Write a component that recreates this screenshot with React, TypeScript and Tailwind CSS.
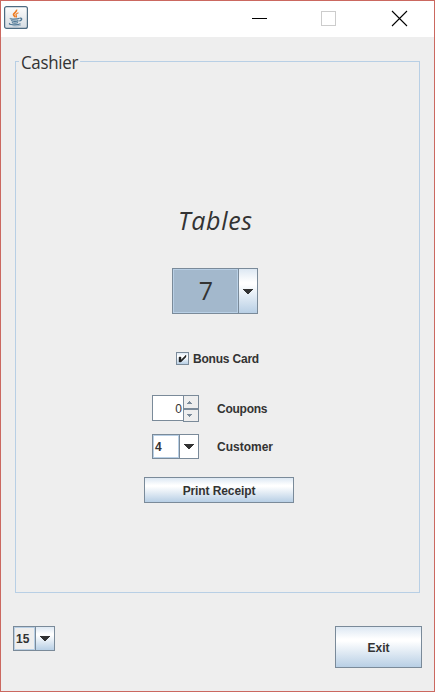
import React from "react";

const arial = "font-['Liberation_Sans',Arial,sans-serif] font-bold text-[12px] leading-[14px] text-[#333333]";
const metal = "bg-[linear-gradient(180deg,#dde8f3_0%,#ffffff_30%,#ffffff_35%,#b8cfe5_100%)]";

function Arrow() {
  return (
    <svg width="10" height="5" viewBox="0 0 10 5" shapeRendering="crispEdges">
      <path d="M0 0h10v1h-1v1h-1v1h-1v1h-1v1H4V4H3V3H2V2H1V1H0z" fill="#333" />
    </svg>
  );
}

function JavaIcon() {
  return (
    <svg width="24" height="23" viewBox="0 0 24 23" fill="none">
      <defs>
        <linearGradient id="plate" x1="0" y1="0" x2="0" y2="1">
          <stop offset="0" stopColor="#fdfdfd" />
          <stop offset="1" stopColor="#d5dce2" />
        </linearGradient>
      </defs>
      <rect x="0.6" y="0.6" width="22.8" height="21.8" rx="2" fill="url(#plate)" stroke="#4d6b82" strokeWidth="1.2" />
      <path d="M12.5 3.700c1 2-3.300 3.300-3 5 .2 1.200 1.500 1.700 1.800 2.600" stroke="#ee7b22" strokeWidth="1.700" />
      <path d="M14.500 6.800c-2 .8-3.200 1.700-2.400 2.600.6.8.5 1.400-.3 2" stroke="#ee7b22" strokeWidth="1.200" />
      <path d="M6.500 12.300c-1.500 1.100 7 1.100 9 0M7.300 14.300c.5 1.200 5.700 1.200 7.200.3M8 16.300c.8 1 4.500 1 6 .2M15.800 12.200c2.800-.5 2.500 2.200-.4 2.800" stroke="#4f7896" strokeWidth="1.300" />
      <path d="M6 17.300c-3.500 1.600 8 2.300 10.500.3" stroke="#4f7896" strokeWidth="1.100" />
      <path d="M8.500 19.700c3 .4 6.500.3 8.500-.8" stroke="#86a3b9" strokeWidth=".8" />
    </svg>
  );
}

export default function App() {
  return (
    <div className="flex h-[692px] w-[435px] flex-col border border-[#cb6860] bg-[#eeeeee]">
      <header className="flex h-[36px] shrink-0 bg-white">
        <div className="ml-[3px] mt-[5px]"><JavaIcon /></div>
        <svg className="ml-[223px] mt-[9px]" width="160" height="18" viewBox="0 0 160 18" fill="none">
          <path d="M1 8.500h15" stroke="#000" />
          <rect x="70.500" y="1.500" width="14" height="14" stroke="#cccccc" />
          <path d="M141 1l15 15M156 1l-15 15" stroke="#000" strokeWidth="1.100" />
        </svg>
      </header>

      <main className="flex grow flex-col">
        <section className="ml-[14px] mt-[24px] flex h-[532px] w-[405px] flex-col items-start border border-[#b8cfe5]">
          <h1 className="-mt-[13px] ml-[3px] h-[26px] w-[65px] origin-left scale-x-[0.94] whitespace-nowrap bg-[#eeeeee] pl-[2px] font-['Open_Sans',sans-serif] text-[18px] font-normal leading-[26px] tracking-[-0.300px] text-[#333333]">Cashier</h1>
          <h2 className="ml-[162px] mt-[126px] h-[38px] whitespace-nowrap font-['Open_Sans',sans-serif] text-[25px] font-normal italic leading-[38px] tracking-[0.700px] text-[#333333]">Tables</h2>

          <div className="ml-[156px] mt-[29px] flex h-[46px] w-[86px] border border-[#7a8a99]">
            <div className="flex w-[65px] items-center justify-center border border-[#b8cfe5] bg-[#a3b8cc] pl-[1px] font-['Open_Sans',sans-serif] text-[25px] text-[#333333]">7</div>
            <div className={"flex grow items-center border-l border-[#7a8a99] pl-[4px] pt-[1px] " + metal}><Arrow /></div>
          </div>

          <label className="ml-[160px] mt-[37px] flex h-[14px] items-center">
            <span className={"flex h-[13px] w-[13px] items-center justify-center border border-[#7a8a99] " + metal}>
              <svg width="9" height="9" viewBox="0 0 9 9"><path d="M1 3h2v3l5-5v2L3 8H1z" fill="#222" stroke="#222" strokeWidth=".4" /></svg>
            </span>
            <span className={"ml-[4px] mt-[2px] whitespace-nowrap tracking-[-0.200px] " + arial}>Bonus Card</span>
          </label>

          <div className="ml-[136px] mt-[30px] flex h-[27px]">
            <div className="flex h-[26px] w-[31px] items-center justify-end border border-r-0 border-[#7a8a99] bg-white pr-[1px] pt-[1px] font-['Liberation_Sans',sans-serif] text-[12px] text-[#333333]">0</div>
            <div className="flex w-[16px] flex-col border border-[#7a8a99]">
              <div className="flex h-[12px] items-center pl-[3px]"><svg width="5" height="3" shapeRendering="crispEdges"><path d="M2 0h1v1h1v1h1v1H0V2h1V1h1z" fill="#7a8a99" /></svg></div>
              <div className="h-[2px] bg-[#7a8a99]" />
              <div className="flex grow items-center pl-[3px]"><svg width="5" height="3" shapeRendering="crispEdges"><path d="M0 0h5v1H4v1H3v1H2V2H1V1H0z" fill="#7a8a99" /></svg></div>
            </div>
            <span className={"ml-[18px] mt-[7px] tracking-[-0.250px] " + arial}>Coupons</span>
          </div>

          <div className="ml-[136px] mt-[12px] flex h-[25px]">
            <div className="flex w-[47px] border border-[#7a8a99] bg-white">
              <div className={"flex w-[26px] items-center border border-[#b8cfe5] pl-[1px] " + arial}>4</div>
              <div className="flex grow items-center border-l border-[#7a8a99] pl-[4px]"><Arrow /></div>
            </div>
            <span className={"ml-[18px] mt-[6px] " + arial}>Customer</span>
          </div>

          <button className={"ml-[128px] mt-[18px] h-[26px] w-[150px] border border-[#7a8a99] pt-[2px] tracking-[-0.100px] " + arial + " " + metal}>Print Receipt</button>
        </section>

        <footer className="ml-[12px] mt-[33px] flex w-[409px] items-start justify-between">
          <div className="flex h-[25px] w-[42px] border border-[#7a8a99]">
            <div className={"flex w-[21px] items-center border border-[#b8cfe5] pl-[1px] " + arial}>15</div>
            <div className={"flex grow items-center border-l border-[#7a8a99] pl-[4px] " + metal}><Arrow /></div>
          </div>
          <button className={"h-[42px] w-[87px] border border-[#7a8a99] pt-[2px] " + arial + " " + metal}>Exit</button>
        </footer>
      </main>
    </div>
  );
}
